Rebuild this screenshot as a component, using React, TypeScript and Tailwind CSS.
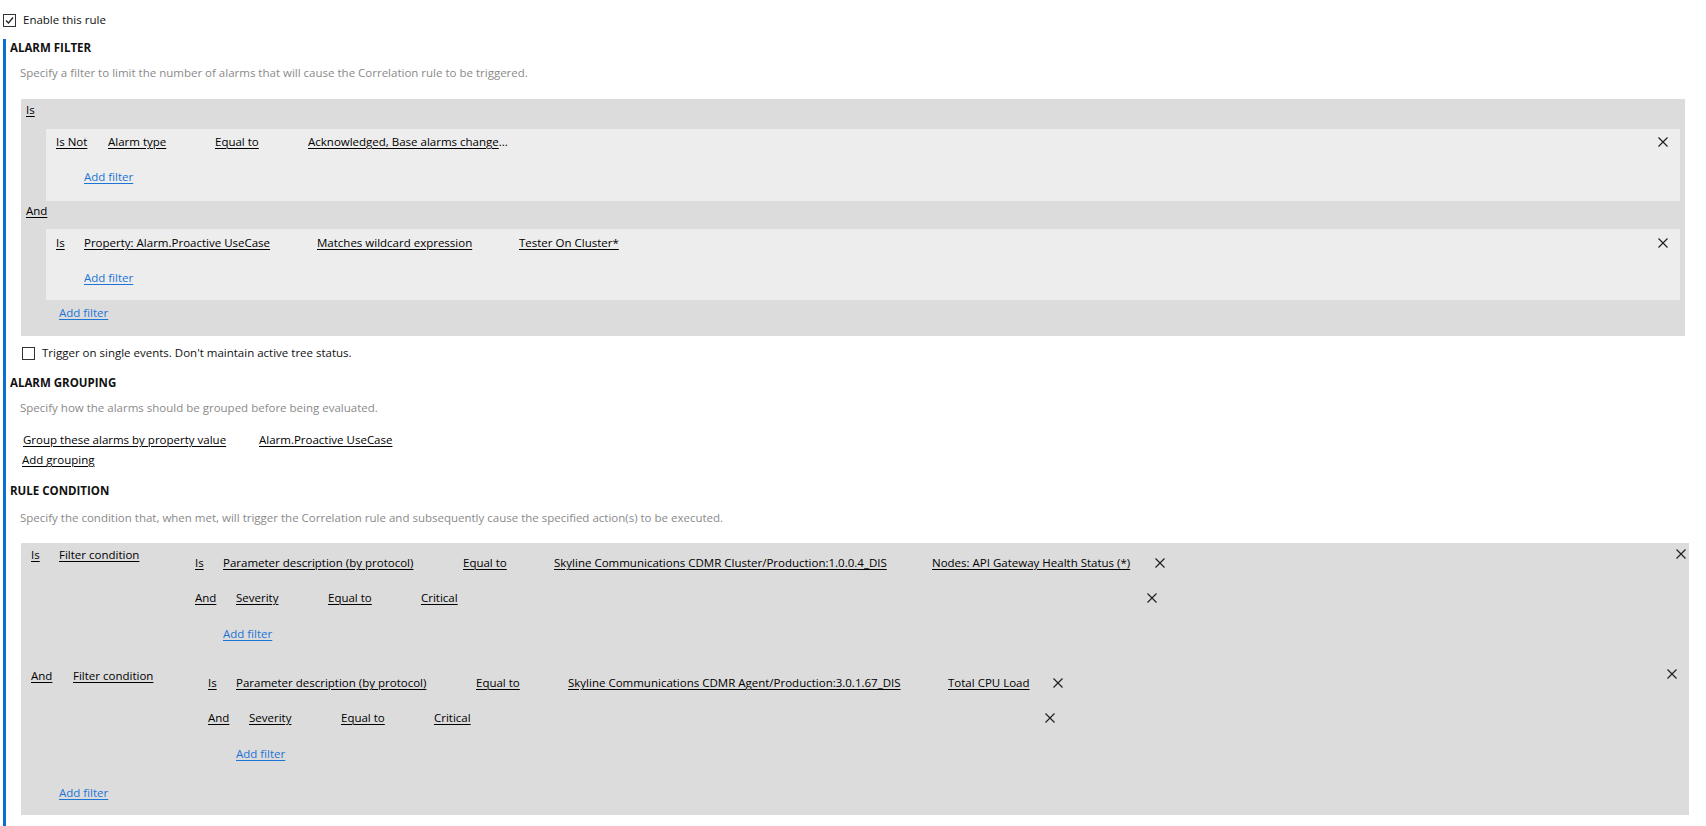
import React from "react";

function Cross({ className = "" }: { className?: string }) {
  return (
    <svg width="10" height="10" viewBox="0 0 10 10" className={"shrink-0 " + className}>
      <path d="M0.5 0.5 L9.5 9.5 M9.5 0.5 L0.5 9.5" stroke="#1b1b1b" strokeWidth="1.1" fill="none" />
    </svg>
  );
}

function U({ children, className = "" }: { children: React.ReactNode; className?: string }) {
  return (
    <span className={"whitespace-nowrap " + className}>
      <span className="underline underline-offset-[2px] decoration-[1px]">{children}</span>
    </span>
  );
}

function Link({ children, className = "" }: { children: React.ReactNode; className?: string }) {
  return (
    <div className={"h-[16px] " + className}>
      <span className="text-[#1c74d4] underline underline-offset-[2px] decoration-[1px] whitespace-nowrap">{children}</span>
    </div>
  );
}

function Checkbox({ checked }: { checked?: boolean }) {
  return (
    <div className="w-[13px] h-[13px] border border-[#333] bg-white flex items-center justify-center shrink-0">
      {checked && (
        <svg width="9" height="9" viewBox="0 0 9 9">
          <path d="M1 4.5 L3.5 7 L8 1.5" stroke="#222" strokeWidth="1.3" fill="none" />
        </svg>
      )}
    </div>
  );
}

function Heading({ children, className = "" }: { children: React.ReactNode; className?: string }) {
  return <div className={"h-[16px] font-bold text-[#111] " + className}>{children}</div>;
}

function Desc({ children, className = "" }: { children: React.ReactNode; className?: string }) {
  return <div className={"h-[16px] ml-[10px] text-[#8a8a8a] " + className}>{children}</div>;
}

type Cond = {
  op: string;
  opW: string;
  fcW: string;
  xMr: string;
  xMt: string;
  nestMt: string;
  eqW: string;
  skyline: string;
  skyW: string;
  last: string;
  lastW: string;
  critW: string;
};

const CONDITIONS: Cond[] = [
  {
    op: "Is",
    opW: "w-[28px]",
    fcW: "w-[136px]",
    xMr: "mr-[3px]",
    xMt: "mt-[2px]",
    nestMt: "mt-[8px]",
    eqW: "w-[91px]",
    skyline: "Skyline Communications CDMR Cluster/Production:1.0.0.4_DIS",
    skyW: "w-[378px]",
    last: "Nodes: API Gateway Health Status (*)",
    lastW: "w-[223px]",
    critW: "w-[726px]",
  },
  {
    op: "And",
    opW: "w-[42px]",
    fcW: "w-[135px]",
    xMr: "mr-[12px]",
    xMt: "mt-[1px]",
    nestMt: "mt-[7px]",
    eqW: "w-[92px]",
    skyline: "Skyline Communications CDMR Agent/Production:3.0.1.67_DIS",
    skyW: "w-[380px]",
    last: "Total CPU Load",
    lastW: "w-[105px]",
    critW: "w-[611px]",
  },
];

function Condition({ c, className = "" }: { c: Cond; className?: string }) {
  return (
    <div className={"flex items-start " + className}>
      <U className={"h-[16px] " + c.opW}>{c.op}</U>
      <U className={"h-[16px] " + c.fcW}>Filter condition</U>
      <div className={"flex flex-col " + c.nestMt}>
        <div className="flex items-center h-[16px]">
          <U className="w-[28px]">Is</U>
          <U className="w-[240px]">Parameter description (by protocol)</U>
          <U className={c.eqW}>Equal to</U>
          <U className={c.skyW}>{c.skyline}</U>
          <U className={c.lastW}>{c.last}</U>
          <Cross />
        </div>
        <div className="flex items-center h-[16px] mt-[19px]">
          <U className="w-[41px]">And</U>
          <U className="w-[92px]">Severity</U>
          <U className="w-[93px]">Equal to</U>
          <U className={c.critW}>Critical</U>
          <Cross />
        </div>
        <Link className="mt-[20px] ml-[28px]">Add filter</Link>
      </div>
      <div className="flex-1" />
      <Cross className={c.xMt + " " + c.xMr} />
    </div>
  );
}

export default function App() {
  return (
    <div className="min-h-screen bg-white text-[11.5px] leading-[16px] text-black font-['Open_Sans','Noto_Sans',sans-serif] overflow-hidden">
      <div className="flex items-center gap-[7px] pl-[3px] pt-[12px] h-[28px]">
        <Checkbox checked />
        <span className="text-[#111]">Enable this rule</span>
      </div>

      <div className="mt-[11px] ml-[3px] border-l-[3px] border-[#0a6ed1] pl-[4px] pt-[1px] pb-[20px]">
        {/* Alarm filter */}
        <Heading>ALARM FILTER</Heading>
        <Desc className="mt-[9px]">
          Specify a filter to limit the number of alarms that will cause the Correlation rule to be triggered.
        </Desc>

        <div className="mt-[18px] ml-[11px] mr-[21px] bg-[#dcdcdc] pt-[3px] pb-[15px]">
          <U className="block h-[16px] pl-[5px]">Is</U>

          <div className="mt-[11px] ml-[25px] mr-[5px] bg-[#ededed] pt-[5px] pb-[16px]">
            <div className="flex items-center h-[16px] pl-[10px] pr-[12px]">
              <U className="w-[52px]">Is Not</U>
              <U className="w-[107px]">Alarm type</U>
              <U className="w-[93px]">Equal to</U>
              <span className="whitespace-nowrap">
                <span className="underline underline-offset-[2px] decoration-[1px]">Acknowledged, Base alarms change</span>...
              </span>
              <div className="flex-1" />
              <Cross />
            </div>
            <Link className="mt-[19px] ml-[38px]">Add filter</Link>
          </div>

          <U className="block h-[16px] pl-[5px] mt-[2px]">And</U>

          <div className="mt-[10px] ml-[25px] mr-[5px] bg-[#ededed] pt-[6px] pb-[14px]">
            <div className="flex items-center h-[16px] pl-[10px] pr-[12px]">
              <U className="w-[28px]">Is</U>
              <U className="w-[233px]">Property: Alarm.Proactive UseCase</U>
              <U className="w-[202px]">Matches wildcard expression</U>
              <U>Tester On Cluster*</U>
              <div className="flex-1" />
              <Cross />
            </div>
            <Link className="mt-[19px] ml-[38px]">Add filter</Link>
          </div>

          <Link className="mt-[5px] ml-[38px]">Add filter</Link>
        </div>

        <div className="flex items-center gap-[7px] ml-[12px] mt-[9px] h-[16px]">
          <Checkbox />
          <span className="text-[#111]">Trigger on single events. Don't maintain active tree status.</span>
        </div>

        {/* Alarm grouping */}
        <Heading className="mt-[14px]">ALARM GROUPING</Heading>
        <Desc className="mt-[9px]">Specify how the alarms should be grouped before being evaluated.</Desc>

        <div className="flex items-center h-[16px] mt-[16px] ml-[13px]">
          <U className="w-[236px]">Group these alarms by property value</U>
          <U>Alarm.Proactive UseCase</U>
        </div>
        <U className="block h-[16px] mt-[4px] ml-[12px]">Add grouping</U>

        {/* Rule condition */}
        <Heading className="mt-[15px]">RULE CONDITION</Heading>
        <Desc className="mt-[11px]">
          Specify the condition that, when met, will trigger the Correlation rule and subsequently cause the specified action(s) to be executed.
        </Desc>

        <div className="mt-[17px] ml-[11px] mr-[17px] bg-[#dcdcdc] pt-[4px] pb-[14px] pl-[10px]">
          <Condition c={CONDITIONS[0]} />
          <Condition c={CONDITIONS[1]} className="mt-[26px]" />
          <Link className="mt-[23px] ml-[28px]">Add filter</Link>
        </div>
      </div>
    </div>
  );
}
